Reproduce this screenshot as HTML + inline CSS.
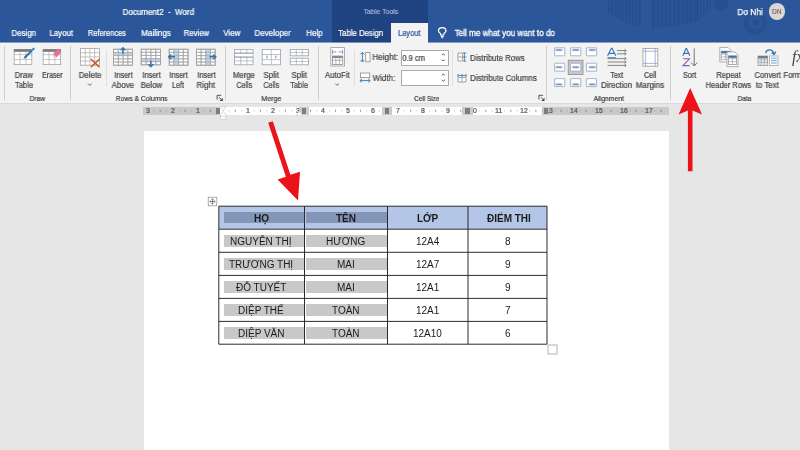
<!DOCTYPE html>
<html><head><meta charset="utf-8"><title>Word</title>
<style>
html,body{margin:0;padding:0;}
body{width:800px;height:450px;overflow:hidden;position:relative;background:#e6e6e6;font-family:"Liberation Sans",sans-serif;}
.t{position:absolute;will-change:transform;white-space:nowrap;text-align:center;transform-origin:50% 50%;display:block;}
.r{position:absolute;}
svg{position:absolute;left:0;top:0;overflow:visible;}
</style></head><body>
<div class="r" style="left:0px;top:0px;width:800px;height:42px;background:#2b579a;"></div>
<div class="r" style="left:0px;top:42px;width:800px;height:61px;background:#f3f3f3;"></div>
<div class="r" style="left:0px;top:103px;width:800px;height:1px;background:#dadada;"></div>
<div class="r" style="left:0px;top:42px;width:800px;height:1px;background:#879fc3;"></div>
<svg width="800" height="42" viewBox="0 0 800 42"><g fill="#264f8f"><rect x="608.0" y="0" width="2.2" height="13.0"/><rect x="611.4" y="0" width="2.2" height="15.2"/><rect x="614.8" y="0" width="2.2" height="17.3"/><rect x="618.2" y="0" width="2.2" height="19.2"/><rect x="621.6" y="0" width="2.2" height="21.0"/><rect x="625.0" y="0" width="2.2" height="22.6"/><rect x="628.4" y="0" width="2.2" height="23.9"/><rect x="631.8" y="0" width="2.2" height="25.0"/><rect x="635.2" y="0" width="2.2" height="25.6"/><rect x="638.6" y="0" width="2.2" height="26.0"/><rect x="652.0" y="0" width="3" height="27.5"/><rect x="656.2" y="0" width="3" height="27.4"/><rect x="660.4" y="0" width="3" height="27.3"/><rect x="664.6" y="0" width="3" height="27.0"/><rect x="668.8" y="0" width="3" height="26.6"/><rect x="673.0" y="0" width="3" height="26.1"/><rect x="677.2" y="0" width="3" height="25.5"/><rect x="681.4" y="0" width="3" height="24.8"/><rect x="685.6" y="0" width="3" height="24.0"/><rect x="689.8" y="0" width="3" height="23.1"/><rect x="694.0" y="0" width="3" height="22.0"/><rect x="697.0" y="0" width="1.6" height="21.0"/><rect x="700.0" y="0" width="1.6" height="18.6"/><rect x="703.0" y="0" width="1.6" height="16.2"/><rect x="706.0" y="0" width="1.6" height="13.8"/><rect x="709.0" y="0" width="1.6" height="11.4"/><circle cx="721" cy="3" r="7.5"/></g><circle cx="755.5" cy="22.5" r="9.5" fill="none" stroke="#27508f" stroke-width="5"/><circle cx="755.5" cy="22.5" r="3.2" fill="#27508f"/></svg>
<div class="r" style="left:331.5px;top:0px;width:96.5px;height:42px;background:#1f4380;"></div>
<div class="r" style="left:331.5px;top:42px;width:96.5px;height:1px;background:#8193b4;"></div>
<div class="r" style="left:391px;top:22.5px;width:37px;height:21px;background:#f3f3f3;"></div>
<span class="t" style="left:119.20px;top:7.34px;width:78.79px;font-size:8.6px;line-height:10.32px;color:#fff;transform:scaleX(0.9311);white-space:pre;-webkit-text-stroke:0.22px #fff;">Document2  -  Word</span>
<span class="t" style="left:360.66px;top:6.63px;width:39.89px;font-size:7.6px;line-height:9.12px;color:#b4c2dc;transform:scaleX(0.9186);-webkit-text-stroke:0.1px #b4c2dc;">Table Tools</span>
<span class="t" style="left:736.46px;top:6.54px;width:28.29px;font-size:8.6px;line-height:10.32px;color:#fff;transform:scaleX(0.9701);-webkit-text-stroke:0.25px #fff;">Do Nhi</span>
<div class="r" style="left:768.5px;top:3.1px;width:16.6px;height:16.6px;border-radius:50%;background:#dcd6d4;"></div>
<span class="t" style="left:770.83px;top:7.72px;width:11.53px;font-size:6.6px;line-height:7.92px;color:#707070;transform:scaleX(0.9966);-webkit-text-stroke:0.22px #707070;">DN</span>
<span class="t" style="left:9.94px;top:29.07px;width:27.53px;font-size:8.2px;line-height:9.84px;color:#fff;transform:scaleX(0.9598);-webkit-text-stroke:0.22px #fff;">Design</span>
<span class="t" style="left:48.39px;top:29.07px;width:26.62px;font-size:8.2px;line-height:9.84px;color:#fff;transform:scaleX(0.9545);-webkit-text-stroke:0.22px #fff;">Layout</span>
<span class="t" style="left:85.13px;top:29.07px;width:43.93px;font-size:8.2px;line-height:9.84px;color:#fff;transform:scaleX(0.9062);-webkit-text-stroke:0.22px #fff;">References</span>
<span class="t" style="left:139.56px;top:29.07px;width:32.08px;font-size:8.2px;line-height:9.84px;color:#fff;transform:scaleX(0.9808);-webkit-text-stroke:0.22px #fff;">Mailings</span>
<span class="t" style="left:182.26px;top:29.07px;width:28.89px;font-size:8.2px;line-height:9.84px;color:#fff;transform:scaleX(0.9410);-webkit-text-stroke:0.22px #fff;">Review</span>
<span class="t" style="left:222.29px;top:29.07px;width:19.63px;font-size:8.2px;line-height:9.84px;color:#fff;transform:scaleX(0.9588);-webkit-text-stroke:0.22px #fff;">View</span>
<span class="t" style="left:253.31px;top:29.07px;width:39.38px;font-size:8.2px;line-height:9.84px;color:#fff;transform:scaleX(0.9739);-webkit-text-stroke:0.22px #fff;">Developer</span>
<span class="t" style="left:304.57px;top:29.07px;width:18.86px;font-size:8.2px;line-height:9.84px;color:#fff;transform:scaleX(0.9606);-webkit-text-stroke:0.22px #fff;">Help</span>
<span class="t" style="left:335.80px;top:29.07px;width:49.41px;font-size:8.2px;line-height:9.84px;color:#fff;transform:scaleX(0.9492);-webkit-text-stroke:0.22px #fff;">Table Design</span>
<span class="t" style="left:395.69px;top:29.07px;width:26.62px;font-size:8.2px;line-height:9.84px;color:#2b579a;transform:scaleX(0.9139);-webkit-text-stroke:0.22px #2b579a;">Layout</span>
<span class="t" style="left:452.17px;top:28.26px;width:105.65px;font-size:8.4px;line-height:10.08px;color:#fff;transform:scaleX(0.9705);-webkit-text-stroke:0.3px #fff;">Tell me what you want to do</span>
<svg width="800" height="450" viewBox="0 0 800 450"><g fill="none" stroke="#fff" stroke-width="1.15">
<path d="M440.6 35 L440.6 33.6 C438.6 32.2 438.2 30.6 438.6 29.6 C439.2 27.8 440.8 27.6 442.2 27.6 C443.6 27.6 445.2 27.8 445.8 29.6 C446.2 30.6 445.8 32.2 443.8 33.6 L443.8 35 Z"/>
<path d="M440.8 36.4 H443.6 M441.2 37.7 H443.2"/></g></svg>
<div class="r" style="left:4.3px;top:46px;width:1px;height:54px;background:#cfcfcf;"></div>
<div class="r" style="left:70.2px;top:46px;width:1px;height:54px;background:#cfcfcf;"></div>
<div class="r" style="left:224.7px;top:46px;width:1px;height:54px;background:#cfcfcf;"></div>
<div class="r" style="left:317.5px;top:46px;width:1px;height:54px;background:#cfcfcf;"></div>
<div class="r" style="left:546.3px;top:46px;width:1px;height:54px;background:#cfcfcf;"></div>
<div class="r" style="left:670.3px;top:46px;width:1px;height:54px;background:#cfcfcf;"></div>
<div class="r" style="left:105.8px;top:49.5px;width:1px;height:36px;background:#e0e0e0;"></div>
<div class="r" style="left:353.8px;top:49.5px;width:1px;height:36px;background:#e0e0e0;"></div>
<div class="r" style="left:451.9px;top:49.5px;width:1px;height:36px;background:#e0e0e0;"></div>
<span class="t" style="left:13.20px;top:69.86px;width:21.60px;font-size:8.4px;line-height:10.08px;color:#444;transform:scaleX(0.9285);-webkit-text-stroke:0.22px #444;">Draw</span>
<span class="t" style="left:12.96px;top:80.16px;width:22.08px;font-size:8.4px;line-height:10.08px;color:#444;transform:scaleX(0.9063);-webkit-text-stroke:0.22px #444;">Table</span>
<span class="t" style="left:38.53px;top:69.86px;width:26.74px;font-size:8.4px;line-height:10.08px;color:#444;transform:scaleX(0.8245);-webkit-text-stroke:0.22px #444;">Eraser</span>
<span class="t" style="left:77.16px;top:69.86px;width:26.28px;font-size:8.4px;line-height:10.08px;color:#444;transform:scaleX(0.9390);-webkit-text-stroke:0.22px #444;">Delete</span>
<span class="t" style="left:111.80px;top:69.86px;width:23.01px;font-size:8.4px;line-height:10.08px;color:#444;transform:scaleX(0.8663);-webkit-text-stroke:0.22px #444;">Insert</span>
<span class="t" style="left:110.39px;top:80.16px;width:25.82px;font-size:8.4px;line-height:10.08px;color:#444;transform:scaleX(0.9447);-webkit-text-stroke:0.22px #444;">Above</span>
<span class="t" style="left:139.50px;top:69.86px;width:23.01px;font-size:8.4px;line-height:10.08px;color:#444;transform:scaleX(0.8663);-webkit-text-stroke:0.22px #444;">Insert</span>
<span class="t" style="left:138.56px;top:80.16px;width:24.88px;font-size:8.4px;line-height:10.08px;color:#444;transform:scaleX(0.9397);-webkit-text-stroke:0.22px #444;">Below</span>
<span class="t" style="left:166.80px;top:69.86px;width:23.01px;font-size:8.4px;line-height:10.08px;color:#444;transform:scaleX(0.8663);-webkit-text-stroke:0.22px #444;">Insert</span>
<span class="t" style="left:170.29px;top:80.16px;width:16.01px;font-size:8.4px;line-height:10.08px;color:#444;transform:scaleX(0.8565);-webkit-text-stroke:0.22px #444;">Left</span>
<span class="t" style="left:194.50px;top:69.86px;width:23.01px;font-size:8.4px;line-height:10.08px;color:#444;transform:scaleX(0.8663);-webkit-text-stroke:0.22px #444;">Insert</span>
<span class="t" style="left:195.20px;top:80.16px;width:21.61px;font-size:8.4px;line-height:10.08px;color:#444;transform:scaleX(0.9434);-webkit-text-stroke:0.22px #444;">Right</span>
<span class="t" style="left:231.00px;top:69.86px;width:25.81px;font-size:8.4px;line-height:10.08px;color:#444;transform:scaleX(0.9240);-webkit-text-stroke:0.22px #444;">Merge</span>
<span class="t" style="left:233.56px;top:80.16px;width:20.67px;font-size:8.4px;line-height:10.08px;color:#444;transform:scaleX(0.8436);-webkit-text-stroke:0.22px #444;">Cells</span>
<span class="t" style="left:262.43px;top:69.86px;width:18.34px;font-size:8.4px;line-height:10.08px;color:#444;transform:scaleX(0.9424);-webkit-text-stroke:0.22px #444;">Split</span>
<span class="t" style="left:261.26px;top:80.16px;width:20.67px;font-size:8.4px;line-height:10.08px;color:#444;transform:scaleX(0.8436);-webkit-text-stroke:0.22px #444;">Cells</span>
<span class="t" style="left:290.13px;top:69.86px;width:18.34px;font-size:8.4px;line-height:10.08px;color:#444;transform:scaleX(0.9424);-webkit-text-stroke:0.22px #444;">Split</span>
<span class="t" style="left:288.26px;top:80.16px;width:22.08px;font-size:8.4px;line-height:10.08px;color:#444;transform:scaleX(0.8889);-webkit-text-stroke:0.22px #444;">Table</span>
<span class="t" style="left:323.39px;top:69.86px;width:28.61px;font-size:8.4px;line-height:10.08px;color:#444;transform:scaleX(0.9338);-webkit-text-stroke:0.22px #444;">AutoFit</span>
<span class="t" style="left:607.70px;top:69.86px;width:17.41px;font-size:8.4px;line-height:10.08px;color:#444;transform:scaleX(0.8439);-webkit-text-stroke:0.22px #444;">Text</span>
<span class="t" style="left:598.83px;top:80.16px;width:35.14px;font-size:8.4px;line-height:10.08px;color:#444;transform:scaleX(0.9353);-webkit-text-stroke:0.22px #444;">Direction</span>
<span class="t" style="left:641.96px;top:69.86px;width:16.47px;font-size:8.4px;line-height:10.08px;color:#444;transform:scaleX(0.8638);-webkit-text-stroke:0.22px #444;">Cell</span>
<span class="t" style="left:634.26px;top:80.16px;width:31.88px;font-size:8.4px;line-height:10.08px;color:#444;transform:scaleX(0.9506);-webkit-text-stroke:0.22px #444;">Margins</span>
<span class="t" style="left:681.00px;top:69.86px;width:17.41px;font-size:8.4px;line-height:10.08px;color:#444;transform:scaleX(0.8633);-webkit-text-stroke:0.22px #444;">Sort</span>
<span class="t" style="left:713.86px;top:69.86px;width:29.09px;font-size:8.4px;line-height:10.08px;color:#444;transform:scaleX(0.9008);-webkit-text-stroke:0.22px #444;">Repeat</span>
<span class="t" style="left:701.96px;top:80.16px;width:52.89px;font-size:8.4px;line-height:10.08px;color:#444;transform:scaleX(0.8941);-webkit-text-stroke:0.22px #444;">Header Rows</span>
<span class="t" style="left:751.99px;top:69.86px;width:31.41px;font-size:8.4px;line-height:10.08px;color:#444;transform:scaleX(0.8942);-webkit-text-stroke:0.22px #444;">Convert</span>
<span class="t" style="left:754.40px;top:80.16px;width:26.59px;font-size:8.4px;line-height:10.08px;color:#444;transform:scaleX(0.9393);-webkit-text-stroke:0.22px #444;">to Text</span>
<span class="t" style="left:781.30px;top:69.86px;width:32.81px;font-size:8.4px;line-height:10.08px;color:#444;transform:scaleX(0.9089);-webkit-text-stroke:0.22px #444;">Formula</span>
<svg width="800" height="450" viewBox="0 0 800 450"><g fill="none" stroke="#555" stroke-width="0.9">
<path d="M88 83.6 L89.8 85.4 L91.6 83.6"/><path d="M335.4 83.6 L337.2 85.4 L339 83.6"/></g></svg>
<span class="t" style="left:27.47px;top:93.69px;width:20.67px;font-size:8px;line-height:9.60px;color:#3c3c3c;transform:scaleX(0.8303);-webkit-text-stroke:0.22px #3c3c3c;">Draw</span>
<span class="t" style="left:110.42px;top:93.69px;width:63.35px;font-size:8px;line-height:9.60px;color:#3c3c3c;transform:scaleX(0.8435);-webkit-text-stroke:0.22px #3c3c3c;">Rows &amp; Columns</span>
<span class="t" style="left:259.06px;top:93.69px;width:24.68px;font-size:8px;line-height:9.60px;color:#3c3c3c;transform:scaleX(0.8820);-webkit-text-stroke:0.22px #3c3c3c;">Merge</span>
<span class="t" style="left:410.32px;top:93.69px;width:33.57px;font-size:8px;line-height:9.60px;color:#3c3c3c;transform:scaleX(0.7983);-webkit-text-stroke:0.22px #3c3c3c;">Cell Size</span>
<span class="t" style="left:589.81px;top:93.69px;width:37.57px;font-size:8px;line-height:9.60px;color:#3c3c3c;transform:scaleX(0.8545);-webkit-text-stroke:0.22px #3c3c3c;">Alignment</span>
<span class="t" style="left:735.25px;top:93.69px;width:18.90px;font-size:8px;line-height:9.60px;color:#3c3c3c;transform:scaleX(0.8107);-webkit-text-stroke:0.22px #3c3c3c;">Data</span>
<span class="t" style="left:371.09px;top:52.26px;width:28.62px;font-size:8.4px;line-height:10.08px;color:#444;transform:scaleX(0.9694);-webkit-text-stroke:0.22px #444;">Height:</span>
<span class="t" style="left:370.90px;top:73.06px;width:25.81px;font-size:8.4px;line-height:10.08px;color:#444;transform:scaleX(0.9452);-webkit-text-stroke:0.22px #444;">Width:</span>
<div class="r" style="left:401px;top:50.2px;width:46.3px;height:13.8px;background:#fff;border:1px solid #ababab;"></div>
<div class="r" style="left:401px;top:70.4px;width:46.3px;height:13.8px;background:#fff;border:1px solid #ababab;"></div>
<span class="t" style="left:400.20px;top:52.66px;width:27.21px;font-size:8.4px;line-height:10.08px;color:#444;transform:scaleX(0.8926);-webkit-text-stroke:0.22px #444;">0.9 cm</span>
<span class="t" style="left:467.19px;top:52.56px;width:60.82px;font-size:8.4px;line-height:10.08px;color:#444;transform:scaleX(0.9309);-webkit-text-stroke:0.22px #444;">Distribute Rows</span>
<span class="t" style="left:467.12px;top:73.06px;width:72.96px;font-size:8.4px;line-height:10.08px;color:#444;transform:scaleX(0.9407);-webkit-text-stroke:0.22px #444;">Distribute Columns</span>
<svg width="800" height="450" viewBox="0 0 800 450"><g fill="none" stroke="#444" stroke-width="1">
<path d="M442 55.2 L443.4 53.8 L444.8 55.2 M442 59.6 L443.4 61 L444.8 59.6"/>
<path d="M442 75.4 L443.4 74 L444.8 75.4 M442 79.8 L443.4 81.2 L444.8 79.8"/>
</g></svg>
<svg width="800" height="450" viewBox="0 0 800 450"><rect x="14.2" y="49.6" width="17.6" height="15" fill="#fff" stroke="#a6a6a6" stroke-width="0.8"/><path d="M20.07 49.6 V64.6 M25.93 49.6 V64.6 M14.2 54.60 H31.8 M14.2 59.60 H31.8 " fill="none" stroke="#a6a6a6" stroke-width="0.64"/>
<rect x="13.8" y="49.2" width="18.4" height="2.6" fill="#7a7a7a"/>
<path d="M33.6 47.4 L35 48.8 L26 58 L23.4 58.8 L24.4 56.4 Z" fill="#2e75b6"/><path d="M31.6 49.4 L33 50.8" stroke="#fff" stroke-width="0.6"/>
<rect x="43.2" y="49.6" width="17.4" height="15" fill="#fff" stroke="#a6a6a6" stroke-width="0.8"/><path d="M49.00 49.6 V64.6 M54.80 49.6 V64.6 M43.2 54.60 H60.6 M43.2 59.60 H60.6 " fill="none" stroke="#a6a6a6" stroke-width="0.64"/>
<rect x="42.8" y="49.2" width="18.2" height="2.6" fill="#7a7a7a"/>
<path d="M58.2 48.6 L61.6 52 L56.4 57.4 L53 54 Z" fill="#e0758f"/><path d="M53 54 L56.4 57.4 L55.2 58.4 L52 55.2 Z" fill="#f4c6d0"/>
<rect x="80.4" y="48.6" width="19" height="16.6" fill="#fff" stroke="#a0a0a0" stroke-width="0.8"/><path d="M85.15 48.6 V65.2 M89.90 48.6 V65.2 M94.65 48.6 V65.2 M80.4 52.75 H99.4 M80.4 56.90 H99.4 M80.4 61.05 H99.4 " fill="none" stroke="#a0a0a0" stroke-width="0.64"/>
<path d="M90.8 59 L99.6 67.2 M99.6 59 L90.8 67.2" stroke="#d65532" stroke-width="1.6" fill="none"/>
<rect x="113.6" y="49.2" width="19" height="16" fill="#fff" stroke="#a0a0a0" stroke-width="0.8"/><path d="M118.35 49.2 V65.2 M123.10 49.2 V65.2 M127.85 49.2 V65.2 M113.6 52.40 H132.6 M113.6 55.60 H132.6 M113.6 58.80 H132.6 M113.6 62.00 H132.6 " fill="none" stroke="#a0a0a0" stroke-width="0.64"/>
<rect x="113.6" y="52.2" width="19" height="3.2" fill="#c0d1e8"/>
<rect x="113.6" y="49.2" width="19" height="16" fill="none" stroke="#a0a0a0" stroke-width="0.8"/><path d="M118.35 49.2 V65.2 M123.10 49.2 V65.2 M127.85 49.2 V65.2 M113.6 52.40 H132.6 M113.6 55.60 H132.6 M113.6 58.80 H132.6 M113.6 62.00 H132.6 " fill="none" stroke="#a0a0a0" stroke-width="0.64"/>
<path d="M123 54 V48.2 M120.6 50.4 L123 47.8 L125.4 50.4" stroke="#2e75b6" stroke-width="1.4" fill="none"/>
<rect x="141.2" y="49.2" width="19.4" height="15.6" fill="#fff" stroke="#a0a0a0" stroke-width="0.8"/><path d="M146.05 49.2 V64.8 M150.90 49.2 V64.8 M155.75 49.2 V64.8 M141.2 52.32 H160.6 M141.2 55.44 H160.6 M141.2 58.56 H160.6 M141.2 61.68 H160.6 " fill="none" stroke="#a0a0a0" stroke-width="0.64"/>
<rect x="141.2" y="58.4" width="19.4" height="3.2" fill="#c0d1e8"/>
<rect x="141.2" y="49.2" width="19.4" height="15.6" fill="none" stroke="#a0a0a0" stroke-width="0.8"/><path d="M146.05 49.2 V64.8 M150.90 49.2 V64.8 M155.75 49.2 V64.8 M141.2 52.32 H160.6 M141.2 55.44 H160.6 M141.2 58.56 H160.6 M141.2 61.68 H160.6 " fill="none" stroke="#a0a0a0" stroke-width="0.64"/>
<path d="M150.8 60.4 V66.4 M148.4 64.2 L150.8 66.8 L153.2 64.2" stroke="#2e75b6" stroke-width="1.4" fill="none"/>
<rect x="169.2" y="49.2" width="18.8" height="16" fill="#fff" stroke="#a0a0a0" stroke-width="0.8"/><path d="M173.90 49.2 V65.2 M178.60 49.2 V65.2 M183.30 49.2 V65.2 M169.2 52.40 H188.0 M169.2 55.60 H188.0 M169.2 58.80 H188.0 M169.2 62.00 H188.0 " fill="none" stroke="#a0a0a0" stroke-width="0.64"/>
<rect x="173.8" y="49.2" width="4.8" height="16" fill="#c0d1e8"/>
<rect x="169.2" y="49.2" width="18.8" height="16" fill="none" stroke="#a0a0a0" stroke-width="0.8"/><path d="M173.90 49.2 V65.2 M178.60 49.2 V65.2 M183.30 49.2 V65.2 M169.2 52.40 H188.0 M169.2 55.60 H188.0 M169.2 58.80 H188.0 M169.2 62.00 H188.0 " fill="none" stroke="#a0a0a0" stroke-width="0.64"/>
<path d="M175 56.8 H169 M171.2 54.4 L168.6 56.8 L171.2 59.2" stroke="#2e75b6" stroke-width="1.4" fill="none"/>
<rect x="196.4" y="49.2" width="18.8" height="16" fill="#fff" stroke="#a0a0a0" stroke-width="0.8"/><path d="M201.10 49.2 V65.2 M205.80 49.2 V65.2 M210.50 49.2 V65.2 M196.4 52.40 H215.20000000000002 M196.4 55.60 H215.20000000000002 M196.4 58.80 H215.20000000000002 M196.4 62.00 H215.20000000000002 " fill="none" stroke="#a0a0a0" stroke-width="0.64"/>
<rect x="205.6" y="49.2" width="4.6" height="16" fill="#c0d1e8"/>
<rect x="196.4" y="49.2" width="18.8" height="16" fill="none" stroke="#a0a0a0" stroke-width="0.8"/><path d="M201.10 49.2 V65.2 M205.80 49.2 V65.2 M210.50 49.2 V65.2 M196.4 52.40 H215.20000000000002 M196.4 55.60 H215.20000000000002 M196.4 58.80 H215.20000000000002 M196.4 62.00 H215.20000000000002 " fill="none" stroke="#a0a0a0" stroke-width="0.64"/>
<path d="M209.4 56.8 H215.4 M213.2 54.4 L215.8 56.8 L213.2 59.2" stroke="#2e75b6" stroke-width="1.4" fill="none"/>
<path d="M217.1 99.5 V95.3 H221.29999999999998" stroke="#444" stroke-width="0.9" fill="none"/><path d="M218.9 97.1 L221.7 99.89999999999999" stroke="#444" stroke-width="0.9" fill="none"/><path d="M222.7 97.7 V100.89999999999999 H219.5 Z" fill="#444"/>
<path d="M538.9 99.5 V95.3 H543.1" stroke="#444" stroke-width="0.9" fill="none"/><path d="M540.6999999999999 97.1 L543.5 99.89999999999999" stroke="#444" stroke-width="0.9" fill="none"/><path d="M544.5 97.7 V100.89999999999999 H541.3 Z" fill="#444"/>
<rect x="234.6" y="49.4" width="18.4" height="15.4" fill="#fff" stroke="#9aa0a8" stroke-width="0.8"/><path d="M240.73 49.4 V64.8 M246.87 49.4 V64.8 M234.6 53.25 H253.0 M234.6 57.10 H253.0 M234.6 60.95 H253.0 " fill="none" stroke="#9aa0a8" stroke-width="0.64"/>
<rect x="235" y="53.4" width="17.6" height="3.4" fill="#fff"/><path d="M234.6 53.2 H253 M234.6 57 H253" stroke="#6f86a6" stroke-width="0.8"/>
<rect x="262.2" y="49.4" width="18.2" height="15.4" fill="#fff" stroke="#9aa0a8" stroke-width="0.8"/><path d="M271.30 49.4 V64.8 M262.2 54.53 H280.4 M262.2 59.67 H280.4 " fill="none" stroke="#9aa0a8" stroke-width="0.64"/>
<path d="M267 55.6 V58.4 M275.8 55.6 V58.4" stroke="#2e75b6" stroke-width="0.8"/>
<rect x="290.2" y="49.4" width="18.2" height="6.4" fill="#fff" stroke="#9aa0a8" stroke-width="0.8"/><path d="M296.27 49.4 V55.8 M302.33 49.4 V55.8 M290.2 52.60 H308.4 " fill="none" stroke="#9aa0a8" stroke-width="0.64"/>
<rect x="290.2" y="58.2" width="18.2" height="6.6" fill="#fff" stroke="#9aa0a8" stroke-width="0.8"/><path d="M296.27 58.2 V64.8 M302.33 58.2 V64.8 M290.2 61.50 H308.4 " fill="none" stroke="#9aa0a8" stroke-width="0.64"/>
<rect x="330.8" y="47.6" width="13.6" height="18.4" fill="#fff" stroke="#9a9a9a" stroke-width="0.8"/>
<rect x="332.4" y="56" width="10.4" height="8.4" fill="#fff" stroke="#8a8a8a" stroke-width="0.8"/><path d="M335.87 56 V64.4 M339.33 56 V64.4 M332.4 60.20 H342.79999999999995 " fill="none" stroke="#8a8a8a" stroke-width="0.64"/>
<rect x="332.4" y="56" width="10.4" height="2" fill="#8a8a8a"/>
<path d="M332.6 49.8 V54 M342.6 49.8 V54 M333.4 51.9 H336.4 M338.8 51.9 H341.8" stroke="#2e75b6" stroke-width="0.7" fill="none"/>
<rect x="365.8" y="52.4" width="4.2" height="9.4" fill="#fff" stroke="#8a8a8a" stroke-width="0.8"/>
<path d="M362.4 52.6 V61.6 M360.4 54.4 L362.4 52.2 L364.4 54.4 M360.4 59.8 L362.4 62 L364.4 59.8" stroke="#2e75b6" stroke-width="0.9" fill="none"/>
<rect x="360.4" y="73" width="9.4" height="4.6" fill="#fff" stroke="#8a8a8a" stroke-width="0.8"/>
<path d="M360.2 80.6 H370 M362 78.8 L359.9 80.6 L362 82.4 M368.2 78.8 L370.3 80.6 L368.2 82.4" stroke="#2e75b6" stroke-width="0.9" fill="none"/>
<path d="M458 53 H462.4 V61 H458 Z M458 57 H462.4" stroke="#8a8a8a" stroke-width="0.8" fill="#fff"/>
<path d="M464.4 52.8 V61.2 M463 53 H466.4 M463 57 H466.4 M463 61 H466.4" stroke="#2e75b6" stroke-width="0.8" fill="none"/>
<path d="M458 77.4 H466 V82 H458 Z M462 77.4 V82" stroke="#8a8a8a" stroke-width="0.8" fill="#fff"/>
<path d="M457.8 75.4 H466.2 M458 74 V77 M462 74 V77 M466 74 V77" stroke="#2e75b6" stroke-width="0.8" fill="none"/>
<rect x="568.2" y="60.2" width="14.8" height="14.4" fill="#c8c8c8" stroke="#8c8c8c" stroke-width="0.8"/>
<rect x="554.6" y="47.8" width="10.2" height="8" rx="0.3" fill="#fff" stroke="#8ea4c2" stroke-width="0.8"/>
<rect x="555.5" y="48.9" width="7" height="2.2" fill="#a9c0de"/>
<path d="M556.7 50.0 H561.3" stroke="#5f7fa8" stroke-width="0.8"/>
<rect x="554.6" y="63.2" width="10.2" height="8" rx="0.3" fill="#fff" stroke="#8ea4c2" stroke-width="0.8"/>
<rect x="555.5" y="66.10000000000001" width="7" height="2.2" fill="#a9c0de"/>
<path d="M556.7 67.2 H561.3" stroke="#5f7fa8" stroke-width="0.8"/>
<rect x="554.6" y="78.6" width="10.2" height="8" rx="0.3" fill="#fff" stroke="#8ea4c2" stroke-width="0.8"/>
<rect x="555.5" y="83.3" width="7" height="2.2" fill="#a9c0de"/>
<path d="M556.7 84.39999999999999 H561.3" stroke="#5f7fa8" stroke-width="0.8"/>
<rect x="570.6" y="47.8" width="10.2" height="8" rx="0.3" fill="#fff" stroke="#8ea4c2" stroke-width="0.8"/>
<rect x="572.2" y="48.9" width="7" height="2.2" fill="#a9c0de"/>
<path d="M573.4000000000001 50.0 H578.0" stroke="#5f7fa8" stroke-width="0.8"/>
<rect x="570.6" y="63.2" width="10.2" height="8" rx="0.3" fill="#fff" stroke="#8ea4c2" stroke-width="0.8"/>
<rect x="572.2" y="66.10000000000001" width="7" height="2.2" fill="#a9c0de"/>
<path d="M573.4000000000001 67.2 H578.0" stroke="#5f7fa8" stroke-width="0.8"/>
<rect x="570.6" y="78.6" width="10.2" height="8" rx="0.3" fill="#fff" stroke="#8ea4c2" stroke-width="0.8"/>
<rect x="572.2" y="83.3" width="7" height="2.2" fill="#a9c0de"/>
<path d="M573.4000000000001 84.39999999999999 H578.0" stroke="#5f7fa8" stroke-width="0.8"/>
<rect x="586.4" y="47.8" width="10.2" height="8" rx="0.3" fill="#fff" stroke="#8ea4c2" stroke-width="0.8"/>
<rect x="588.6999999999999" y="48.9" width="7" height="2.2" fill="#a9c0de"/>
<path d="M589.9 50.0 H594.4999999999999" stroke="#5f7fa8" stroke-width="0.8"/>
<rect x="586.4" y="63.2" width="10.2" height="8" rx="0.3" fill="#fff" stroke="#8ea4c2" stroke-width="0.8"/>
<rect x="588.6999999999999" y="66.10000000000001" width="7" height="2.2" fill="#a9c0de"/>
<path d="M589.9 67.2 H594.4999999999999" stroke="#5f7fa8" stroke-width="0.8"/>
<rect x="586.4" y="78.6" width="10.2" height="8" rx="0.3" fill="#fff" stroke="#8ea4c2" stroke-width="0.8"/>
<rect x="588.6999999999999" y="83.3" width="7" height="2.2" fill="#a9c0de"/>
<path d="M589.9 84.39999999999999 H594.4999999999999" stroke="#5f7fa8" stroke-width="0.8"/>
<path d="M607.6 55.8 L611.4 48.2 L612 48.2 L615.8 55.8 M609 53.4 H614.4" stroke="#2e75b6" stroke-width="1.1" fill="none"/>
<path d="M607.4 57.6 H616" stroke="#2e75b6" stroke-width="0.8"/>
<path d="M617 50.6 H626 M624.6 49.4 L626.2 50.6 L624.6 51.800000000000004 M617 53.8 H626 M624.6 52.599999999999994 L626.2 53.8 L624.6 55.0 M607.6 58.6 H626 M624.6 57.4 L626.2 58.6 L624.6 59.800000000000004 M607.6 62 H626 M624.6 60.8 L626.2 62 L624.6 63.2 M607.6 65.4 H626 M624.6 64.2 L626.2 65.4 L624.6 66.60000000000001 " stroke="#666" stroke-width="0.8" fill="none"/>
<rect x="643" y="48.4" width="14.8" height="17.8" fill="#fff" stroke="#9a9a9a" stroke-width="0.8"/>
<path d="M645.6 48.4 V66.2 M655.2 48.4 V66.2 M643 51.2 H657.8 M643 63.4 H657.8" stroke="#7f9cc0" stroke-width="0.7" fill="none"/>
<path d="M682.8 55.8 L686 48.6 L686.6 48.6 L689.8 55.8 M684 53.4 H688.6" stroke="#2e75b6" stroke-width="1.1" fill="none"/>
<path d="M683.2 58.8 H689.4 L683 65.6 H689.6" stroke="#8a5aa6" stroke-width="1.1" fill="none"/>
<path d="M694.2 48.4 V65.6 M691.2 62.6 L694.2 66 L697.2 62.6" stroke="#666" stroke-width="0.9" fill="none"/>
<path d="M719.8 47.4 H728 L731 50.4 V62 H719.8 Z" fill="#fff" stroke="#9a9a9a" stroke-width="0.8"/>
<rect x="721.2" y="51.2" width="8.4" height="8.6" fill="#fff" stroke="#9a9a9a" stroke-width="0.8"/><path d="M725.40 51.2 V59.800000000000004 M721.2 54.07 H729.6 M721.2 56.93 H729.6 " fill="none" stroke="#9a9a9a" stroke-width="0.64"/>
<rect x="721.2" y="51.2" width="8.4" height="2" fill="#2e75b6"/>
<path d="M727 52 H735 L738 55 V66.6 H727 Z" fill="#fff" stroke="#9a9a9a" stroke-width="0.8"/>
<rect x="728.6" y="55.8" width="8" height="8.8" fill="#fff" stroke="#9a9a9a" stroke-width="0.8"/><path d="M732.60 55.8 V64.6 M728.6 58.73 H736.6 M728.6 61.67 H736.6 " fill="none" stroke="#9a9a9a" stroke-width="0.64"/>
<rect x="728.6" y="55.8" width="8" height="2" fill="#2e75b6"/>
<rect x="758" y="56" width="9.6" height="9.4" fill="#dfe8f3" stroke="#9a9a9a" stroke-width="0.8"/><path d="M761.20 56 V65.4 M764.40 56 V65.4 M758 59.13 H767.6 M758 62.27 H767.6 " fill="none" stroke="#9a9a9a" stroke-width="0.64"/>
<rect x="758" y="56" width="9.6" height="2.2" fill="#7a7a7a"/>
<rect x="769.6" y="56" width="8.4" height="9.4" fill="#fff" stroke="#9a9a9a" stroke-width="0.7"/>
<path d="M771 58.2 H776.8 M771 60.6 H776.8 M771 63 H776.8" stroke="#2e75b6" stroke-width="0.7"/>
<path d="M765.6 53 C766.4 49.4 772 48 774 53.6 M771.6 52.6 L774.2 54.6 L775.8 51.6" stroke="#2e75b6" stroke-width="1.2" fill="none"/></svg>
<span class="t" style="left:791.5px;top:47px;font-family:'Liberation Serif',serif;font-style:italic;font-size:16px;line-height:20px;color:#444;">fx</span>
<div class="r" style="left:143px;top:107px;width:525.5px;height:7.6px;background:#fff;"></div>
<div class="r" style="left:143px;top:107px;width:77.2px;height:7.6px;background:#c9c9c9;"></div>
<div class="r" style="left:541.5px;top:107px;width:127px;height:7.6px;background:#c9c9c9;"></div>
<span class="t" style="left:144.70px;top:106.78px;width:5.89px;font-size:7px;line-height:8.40px;color:#505050;transform:scaleX(0.9504);-webkit-text-stroke:0.22px #505050;">3</span>
<span class="t" style="left:169.75px;top:106.78px;width:5.89px;font-size:7px;line-height:8.40px;color:#505050;transform:scaleX(0.9504);-webkit-text-stroke:0.22px #505050;">2</span>
<span class="t" style="left:194.80px;top:106.78px;width:5.89px;font-size:7px;line-height:8.40px;color:#505050;transform:scaleX(0.9504);-webkit-text-stroke:0.22px #505050;">1</span>
<span class="t" style="left:244.90px;top:106.78px;width:5.89px;font-size:7px;line-height:8.40px;color:#505050;transform:scaleX(0.9504);-webkit-text-stroke:0.22px #505050;">1</span>
<span class="t" style="left:269.95px;top:106.78px;width:5.89px;font-size:7px;line-height:8.40px;color:#505050;transform:scaleX(0.9504);-webkit-text-stroke:0.22px #505050;">2</span>
<span class="t" style="left:295.00px;top:106.78px;width:5.89px;font-size:7px;line-height:8.40px;color:#505050;transform:scaleX(0.9504);-webkit-text-stroke:0.22px #505050;">3</span>
<span class="t" style="left:320.05px;top:106.78px;width:5.89px;font-size:7px;line-height:8.40px;color:#505050;transform:scaleX(0.9504);-webkit-text-stroke:0.22px #505050;">4</span>
<span class="t" style="left:345.10px;top:106.78px;width:5.89px;font-size:7px;line-height:8.40px;color:#505050;transform:scaleX(0.9504);-webkit-text-stroke:0.22px #505050;">5</span>
<span class="t" style="left:370.15px;top:106.78px;width:5.89px;font-size:7px;line-height:8.40px;color:#505050;transform:scaleX(0.9504);-webkit-text-stroke:0.22px #505050;">6</span>
<span class="t" style="left:395.20px;top:106.78px;width:5.89px;font-size:7px;line-height:8.40px;color:#505050;transform:scaleX(0.9504);-webkit-text-stroke:0.22px #505050;">7</span>
<span class="t" style="left:420.25px;top:106.78px;width:5.89px;font-size:7px;line-height:8.40px;color:#505050;transform:scaleX(0.9504);-webkit-text-stroke:0.22px #505050;">8</span>
<span class="t" style="left:445.30px;top:106.78px;width:5.89px;font-size:7px;line-height:8.40px;color:#505050;transform:scaleX(0.9504);-webkit-text-stroke:0.22px #505050;">9</span>
<span class="t" style="left:468.41px;top:106.78px;width:9.79px;font-size:7px;line-height:8.40px;color:#505050;transform:scaleX(0.9504);-webkit-text-stroke:0.22px #505050;">10</span>
<span class="t" style="left:493.72px;top:106.78px;width:9.27px;font-size:7px;line-height:8.40px;color:#505050;transform:scaleX(1.0184);-webkit-text-stroke:0.22px #505050;">11</span>
<span class="t" style="left:518.51px;top:106.78px;width:9.79px;font-size:7px;line-height:8.40px;color:#505050;transform:scaleX(0.9504);-webkit-text-stroke:0.22px #505050;">12</span>
<span class="t" style="left:543.56px;top:106.78px;width:9.79px;font-size:7px;line-height:8.40px;color:#505050;transform:scaleX(0.9504);-webkit-text-stroke:0.22px #505050;">13</span>
<span class="t" style="left:568.61px;top:106.78px;width:9.79px;font-size:7px;line-height:8.40px;color:#505050;transform:scaleX(0.9504);-webkit-text-stroke:0.22px #505050;">14</span>
<span class="t" style="left:593.66px;top:106.78px;width:9.79px;font-size:7px;line-height:8.40px;color:#505050;transform:scaleX(0.9504);-webkit-text-stroke:0.22px #505050;">15</span>
<span class="t" style="left:618.71px;top:106.78px;width:9.79px;font-size:7px;line-height:8.40px;color:#505050;transform:scaleX(0.9504);-webkit-text-stroke:0.22px #505050;">16</span>
<span class="t" style="left:643.76px;top:106.78px;width:9.79px;font-size:7px;line-height:8.40px;color:#505050;transform:scaleX(0.9504);-webkit-text-stroke:0.22px #505050;">17</span>
<div class="r" style="left:299.1px;top:107px;width:10.399999999999977px;height:7.6px;background:#cbcbcb;"></div>
<div class="r" style="left:381.9px;top:107px;width:10.400000000000034px;height:7.6px;background:#cbcbcb;"></div>
<div class="r" style="left:461.85px;top:107px;width:11.5px;height:7.6px;background:#cbcbcb;"></div>
<div class="r" style="left:216px;top:108px;width:4.199999999999989px;height:5.8px;background:#7e7e7e;"></div>
<div class="r" style="left:302.1px;top:108px;width:4.399999999999977px;height:5.8px;background:#7e7e7e;"></div>
<div class="r" style="left:384.9px;top:108px;width:4.400000000000034px;height:5.8px;background:#7e7e7e;"></div>
<div class="r" style="left:464.85px;top:108px;width:5.5px;height:5.8px;background:#7e7e7e;"></div>
<div class="r" style="left:544.2px;top:108px;width:3.7999999999999545px;height:5.8px;background:#7e7e7e;"></div>
<svg width="800" height="450" viewBox="0 0 800 450"><path d="M160.2 109.6 V112.2 M153.9 110.6 V111.3 M166.4 110.6 V111.3 M185.2 109.6 V112.2 M179.0 110.6 V111.3 M191.5 110.6 V111.3 M210.3 109.6 V112.2 M204.0 110.6 V111.3 M216.5 110.6 V111.3 M235.3 109.6 V112.2 M229.1 110.6 V111.3 M241.6 110.6 V111.3 M260.4 109.6 V112.2 M254.1 110.6 V111.3 M266.6 110.6 V111.3 M285.4 109.6 V112.2 M279.2 110.6 V111.3 M291.7 110.6 V111.3 M310.5 109.6 V112.2 M304.2 110.6 V111.3 M316.7 110.6 V111.3 M335.5 109.6 V112.2 M329.3 110.6 V111.3 M341.8 110.6 V111.3 M360.6 109.6 V112.2 M354.3 110.6 V111.3 M366.8 110.6 V111.3 M385.6 109.6 V112.2 M379.4 110.6 V111.3 M391.9 110.6 V111.3 M410.7 109.6 V112.2 M404.4 110.6 V111.3 M416.9 110.6 V111.3 M435.7 109.6 V112.2 M429.5 110.6 V111.3 M442.0 110.6 V111.3 M460.8 109.6 V112.2 M454.5 110.6 V111.3 M467.0 110.6 V111.3 M485.8 109.6 V112.2 M479.6 110.6 V111.3 M492.1 110.6 V111.3 M510.9 109.6 V112.2 M504.6 110.6 V111.3 M517.1 110.6 V111.3 M535.9 109.6 V112.2 M529.7 110.6 V111.3 M542.2 110.6 V111.3 M561.0 109.6 V112.2 M554.7 110.6 V111.3 M567.2 110.6 V111.3 M586.0 109.6 V112.2 M579.8 110.6 V111.3 M592.3 110.6 V111.3 M611.1 109.6 V112.2 M604.8 110.6 V111.3 M617.3 110.6 V111.3 M636.1 109.6 V112.2 M629.9 110.6 V111.3 M642.4 110.6 V111.3 M661.2 109.6 V112.2 M654.9 110.6 V111.3 " stroke="#777" stroke-width="0.7" fill="none"/><path d="M220.4 106.6 L223.3 111 L226.2 106.6 Z" fill="#fff" stroke="#b5b5b5" stroke-width="0.5"/><path d="M220.5 115 L223.3 111.4 L226.1 115 V119.4 H220.5 Z M220.5 116.4 H226.1" fill="#fff" stroke="#b5b5b5" stroke-width="0.5"/><path d="M296.8 113.8 L299.3 111.4 L301.8 113.8 V115.8 H296.8 Z" fill="#fff" stroke="#b5b5b5" stroke-width="0.5"/></svg>
<div class="r" style="left:143.6px;top:131px;width:525.4px;height:319px;background:#fff;"></div>
<div class="r" style="left:218.8px;top:206.2px;width:328.2px;height:23.0px;background:#b4c6e7;"></div>
<div class="r" style="left:224px;top:212px;width:80.5px;height:11.2px;background:#8496b8;"></div>
<div class="r" style="left:305.5px;top:212px;width:81.4px;height:11.2px;background:#8496b8;"></div>
<div class="r" style="left:224px;top:235.0px;width:80.5px;height:11.6px;background:#c8c8c8;"></div>
<div class="r" style="left:305.5px;top:235.0px;width:81.4px;height:11.6px;background:#c8c8c8;"></div>
<div class="r" style="left:224px;top:258.1px;width:80.5px;height:11.6px;background:#c8c8c8;"></div>
<div class="r" style="left:305.5px;top:258.1px;width:81.4px;height:11.6px;background:#c8c8c8;"></div>
<div class="r" style="left:224px;top:281.2px;width:80.5px;height:11.6px;background:#c8c8c8;"></div>
<div class="r" style="left:305.5px;top:281.2px;width:81.4px;height:11.6px;background:#c8c8c8;"></div>
<div class="r" style="left:224px;top:304.2px;width:80.5px;height:11.6px;background:#c8c8c8;"></div>
<div class="r" style="left:305.5px;top:304.2px;width:81.4px;height:11.6px;background:#c8c8c8;"></div>
<div class="r" style="left:224px;top:327.2px;width:80.5px;height:11.6px;background:#c8c8c8;"></div>
<div class="r" style="left:305.5px;top:327.2px;width:81.4px;height:11.6px;background:#c8c8c8;"></div>
<svg width="800" height="450" viewBox="0 0 800 450"><path d="M218.8 206.2 V344.2 M304.5 206.2 V344.2 M387.5 206.2 V344.2 M468 206.2 V344.2 M547 206.2 V344.2 M218.8 206.2 H547 M218.8 229.2 H547 M218.8 252.3 H547 M218.8 275.4 H547 M218.8 298.4 H547 M218.8 321.4 H547 M218.8 344.2 H547 " stroke="#2c2c2c" stroke-width="1" fill="none"/><rect x="208.2" y="197.2" width="8.6" height="8.6" fill="#fff" stroke="#8a8a8a" stroke-width="0.7"/><path d="M209.8 201.5 H215.2 M212.5 198.8 V204.2 M210.8 200.6 L209.8 201.5 L210.8 202.4 M214.2 200.6 L215.2 201.5 L214.2 202.4 M211.6 199.8 L212.5 198.8 L213.4 199.8 M211.6 203.2 L212.5 204.2 L213.4 203.2" stroke="#555" stroke-width="0.7" fill="none"/><rect x="548" y="345" width="9" height="9" fill="#fff" stroke="#a0a0a0" stroke-width="0.8"/></svg>
<span class="t" style="left:253.15px;top:212.92px;width:17.00px;font-size:10px;line-height:12.00px;color:#1a1a1a;font-weight:bold;transform:scaleX(1.0000);">HỌ</span>
<span class="t" style="left:335.00px;top:212.92px;width:22.00px;font-size:10px;line-height:12.00px;color:#1a1a1a;font-weight:bold;transform:scaleX(1.0000);">TÊN</span>
<span class="t" style="left:416.10px;top:212.92px;width:23.31px;font-size:10px;line-height:12.00px;color:#1a1a1a;font-weight:bold;transform:scaleX(1.0000);">LỚP</span>
<span class="t" style="left:485.56px;top:212.92px;width:45.89px;font-size:10px;line-height:12.00px;color:#1a1a1a;font-weight:bold;transform:scaleX(1.0000);">ĐIỂM THI</span>
<span class="t" style="left:229.31px;top:235.97px;width:63.49px;font-size:10px;line-height:12.00px;color:#1a1a1a;transform:scaleX(1.0000);">NGUYỄN THỊ</span>
<span class="t" style="left:325.33px;top:235.97px;width:41.34px;font-size:10px;line-height:12.00px;color:#1a1a1a;transform:scaleX(1.0000);">HƯƠNG</span>
<span class="t" style="left:415.07px;top:235.97px;width:25.35px;font-size:10px;line-height:12.00px;color:#1a1a1a;transform:scaleX(1.0000);">12A4</span>
<span class="t" style="left:503.72px;top:235.97px;width:7.56px;font-size:10px;line-height:12.00px;color:#1a1a1a;transform:scaleX(1.0000);">8</span>
<span class="t" style="left:227.97px;top:259.07px;width:66.15px;font-size:10px;line-height:12.00px;color:#1a1a1a;transform:scaleX(1.0000);">TRƯƠNG THỊ</span>
<span class="t" style="left:336.11px;top:259.07px;width:19.78px;font-size:10px;line-height:12.00px;color:#1a1a1a;transform:scaleX(1.0000);">MAI</span>
<span class="t" style="left:415.07px;top:259.07px;width:25.35px;font-size:10px;line-height:12.00px;color:#1a1a1a;transform:scaleX(1.0000);">12A7</span>
<span class="t" style="left:503.72px;top:259.07px;width:7.56px;font-size:10px;line-height:12.00px;color:#1a1a1a;transform:scaleX(1.0000);">9</span>
<span class="t" style="left:234.86px;top:282.12px;width:52.38px;font-size:10px;line-height:12.00px;color:#1a1a1a;transform:scaleX(1.0000);">ĐỖ TUYẾT</span>
<span class="t" style="left:336.11px;top:282.12px;width:19.78px;font-size:10px;line-height:12.00px;color:#1a1a1a;transform:scaleX(1.0000);">MAI</span>
<span class="t" style="left:415.07px;top:282.12px;width:25.35px;font-size:10px;line-height:12.00px;color:#1a1a1a;transform:scaleX(1.0000);">12A1</span>
<span class="t" style="left:503.72px;top:282.12px;width:7.56px;font-size:10px;line-height:12.00px;color:#1a1a1a;transform:scaleX(1.0000);">9</span>
<span class="t" style="left:237.17px;top:305.12px;width:47.76px;font-size:10px;line-height:12.00px;color:#1a1a1a;transform:scaleX(1.0000);">DIỆP THẾ</span>
<span class="t" style="left:331.20px;top:305.12px;width:29.60px;font-size:10px;line-height:12.00px;color:#1a1a1a;transform:scaleX(1.0000);">TOÀN</span>
<span class="t" style="left:415.07px;top:305.12px;width:25.35px;font-size:10px;line-height:12.00px;color:#1a1a1a;transform:scaleX(1.0000);">12A1</span>
<span class="t" style="left:503.72px;top:305.12px;width:7.56px;font-size:10px;line-height:12.00px;color:#1a1a1a;transform:scaleX(1.0000);">7</span>
<span class="t" style="left:236.80px;top:328.01px;width:48.50px;font-size:10px;line-height:12.00px;color:#1a1a1a;transform:scaleX(1.0000);">DIỆP VĂN</span>
<span class="t" style="left:331.20px;top:328.01px;width:29.60px;font-size:10px;line-height:12.00px;color:#1a1a1a;transform:scaleX(1.0000);">TOÀN</span>
<span class="t" style="left:412.29px;top:328.01px;width:30.92px;font-size:10px;line-height:12.00px;color:#1a1a1a;transform:scaleX(1.0000);">12A10</span>
<span class="t" style="left:503.72px;top:328.01px;width:7.56px;font-size:10px;line-height:12.00px;color:#1a1a1a;transform:scaleX(1.0000);">6</span>
<svg width="800" height="450" viewBox="0 0 800 450"><g fill="#ec1219" stroke="none">
<path d="M690.2 88 L702 114.6 L692.5 110.6 L692.5 171.2 L687.9 171.2 L687.9 110.6 L678.6 114.6 Z"/>
<path d="M268.2 122.8 L272.8 121.3 L290.4 174.8 L300 171.8 L298 200.6 L277.6 179.6 L285.9 176.8 Z"/>
</g></svg>
</body></html>
